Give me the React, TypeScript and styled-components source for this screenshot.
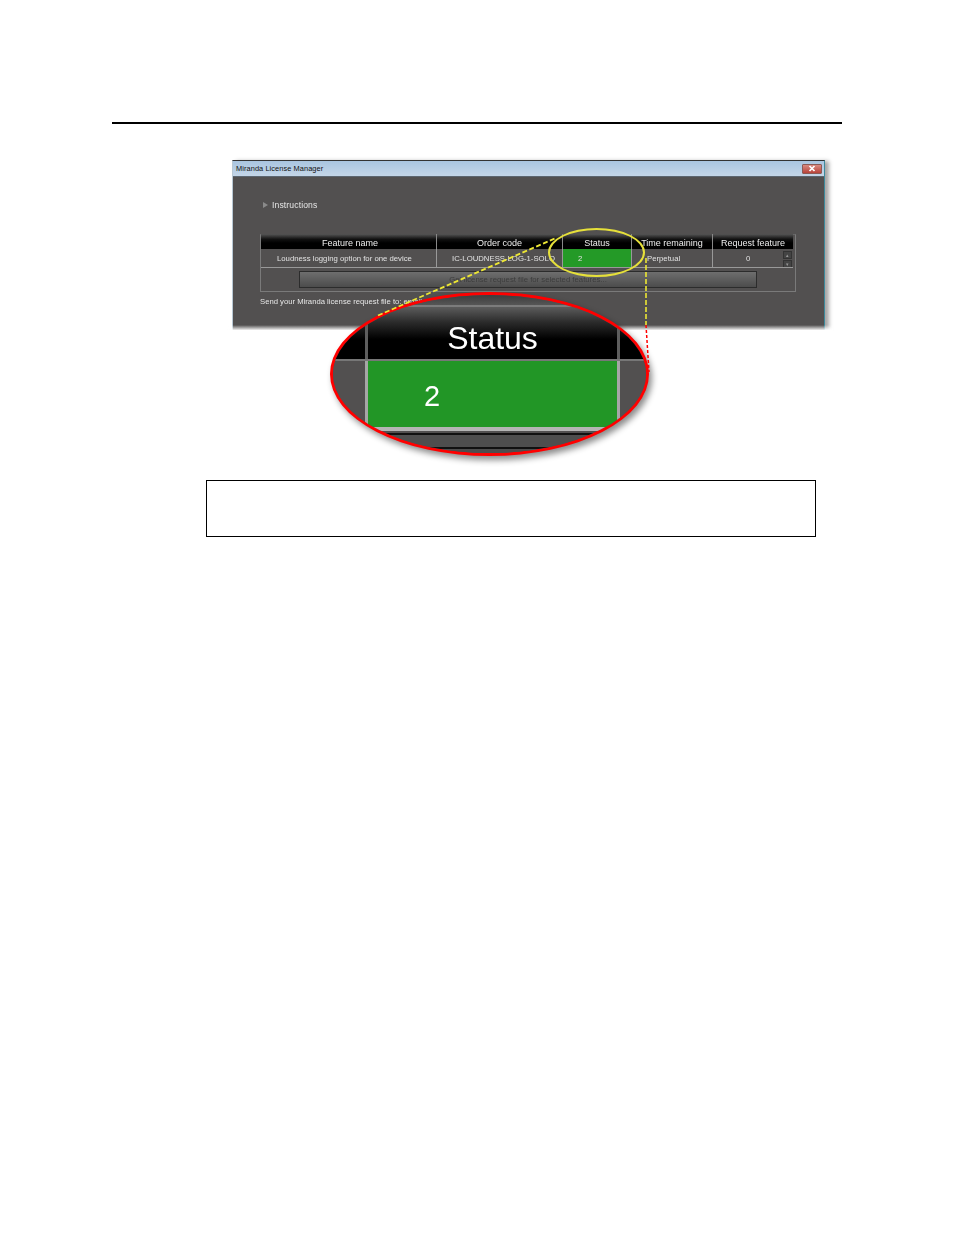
import React from 'react';
import styled, { createGlobalStyle } from 'styled-components';

const Global = createGlobalStyle`
  html, body { margin: 0; padding: 0; background: #fff; }
  * { box-sizing: border-box; }
`;
const Page = styled.div`
  min-height: 1235px; padding: 122px 0 0 112px; background: #fff;
  font-family: "Liberation Sans", Arial, sans-serif; overflow: hidden;
`;
const Rule = styled.div`width: 730px; height: 2px; background: #000;`;
const Figure = styled.div`position: relative; width: 600px; height: 320px; margin: 36px 0 0 120px;`;
const Win = styled.div`
  position: relative; width: 593px; height: 170px; display: flex; flex-direction: column;
  background: #525050; border-top: 1px solid #333; border-left: 1px solid #b8c8d4; border-right: 1px solid #3e8a9c;
  box-shadow: 4px 1px 4px rgba(0,0,0,.35); filter: blur(.4px);
  &::after { content: ""; position: absolute; left: -6px; right: -9px; bottom: -6px; height: 11px;
    background: linear-gradient(rgba(255,255,255,0), #fff 50%); }
`;
const TitleBar = styled.div`
  height: 16px; flex: none; display: flex; align-items: center; justify-content: space-between; padding: 0 2px 0 3px;
  background: linear-gradient(#a9c5e0, #c4d6e8); border-bottom: 1px solid #5c6670;
`;
const TitleText = styled.span`font-size: 7.4px; letter-spacing: .08px; color: #111;`;
const CloseBtn = styled.div`
  width: 20px; height: 10px; display: flex; align-items: center; justify-content: center;
  background: linear-gradient(#d98a80, #b8433a); border: 1px solid #8c5a55; border-radius: 1px;
`;
const Body = styled.div`flex: 1; padding: 22px 27px 0; color: #e6e6e6;`;
const Instructions = styled.div`display: flex; align-items: center; gap: 4px; height: 12px; padding-left: 3px; font-size: 8.6px; letter-spacing: .12px;`;
const Arrow = styled.span`width: 0; height: 0; border-left: 5px solid #8a8a8a; border-top: 3px solid transparent; border-bottom: 3px solid transparent;`;
const Panel = styled.div`width: 536px; height: 58px; margin-top: 23px; border: 1px solid #7a7a7a; border-top: 1px solid #666;`;
const Table = styled.div`display: grid; grid-template-columns: 175px 126px 69px 81px 81px; width: 532px; margin-top: -1px;`;
const Head = styled.div<{ $shift?: number }>`
  height: 15px; padding: 2px 0 0 ${p => p.$shift ?? 0}px; display: flex; align-items: center; justify-content: center; font-size: 9px; color: #eee;
  background: linear-gradient(#555 0, #111 35%, #000 60%); border-left: 1px solid #888; white-space: nowrap;
  &:first-child { border-left: 0; }
`;
const Cell = styled.div<{ $green?: boolean; $pad?: number }>`
  position: relative; height: 19px; padding-top: 1px; display: flex; align-items: center; font-size: 7.75px; color: #e2e2e2; white-space: nowrap; overflow: hidden;
  padding-left: ${p => p.$pad ?? 0}px;
  background: ${p => (p.$green ? '#249a27' : 'transparent')};
  border-left: 1px solid #999; border-bottom: 1px solid #999;
  &:nth-child(6) { border-left: 0; }
`;
const Spinners = styled.div`position: absolute; right: 1px; top: 2px; display: flex; flex-direction: column; gap: 1px;`;
const Spin = styled.div`
  width: 9px; height: 8px; background: #444; border: 1px solid #333; color: #999; font-size: 5px; line-height: 6px; text-align: center;
`;
const ButtonRow = styled.div`display: flex; padding: 3px 0 0 38px;`;
const ReqButton = styled.div`
  width: 458px; height: 17px; display: flex; align-items: center; justify-content: center;
  background: linear-gradient(#6e6e6e, #4c4c4c); border: 1px solid #2c2c2c; font-size: 7.75px; color: #3c3c3c; white-space: nowrap;
`;
const SendText = styled.div`margin-top: 4px; font-size: 7.7px; height: 12px; line-height: 12px; color: #e6e6e6;`;

const Leaders = styled.svg`position: absolute; left: 0; top: 0; width: 600px; height: 320px; overflow: visible; pointer-events: none;`;
const YellowRing = styled.div`
  position: absolute; left: 316px; top: 68px; width: 97px; height: 49px; border: 2px solid #e6e03a; border-radius: 50%;
`;
const Magnifier = styled.div`
  position: absolute; left: 98px; top: 132px; width: 319px; height: 164px; border: 3px solid #f00; border-radius: 50%;
  overflow: hidden; background: #525050; display: flex; flex-direction: column; color: #fff;
  filter: drop-shadow(3px 4px 3px rgba(0,0,0,.45));
`;
const ZoomTop = styled.div`height: 12px; flex: none; background: linear-gradient(#3c3c3c, #565656); border-bottom: 2px solid #7c7c7c;`;
const ZoomRows = styled.div`display: grid; grid-template-columns: 32px 3px 249px 3px 1fr; flex: none;`;
const ZoomHead = styled.div`
  height: 52px; padding-top: 10px; background: linear-gradient(#5c5c5c 0, #2a2a2a 30%, #000 62%); display: flex; align-items: center; justify-content: center;
  font-size: 32px; color: #fff; line-height: 1; filter: blur(.4px);
`;
const ZoomGap = styled.div`height: 2px; grid-column: 1 / -1; background: #777;`;
const ZoomSep = styled.div<{ $h: number; $light?: boolean }>`height: ${p => p.$h}px; background: ${p => (p.$light ? '#a6a6a6' : '#5e5e5e')};`;
const ZoomSide = styled.div`height: 66px; background: #525050;`;
const ZoomGreen = styled.div`
  height: 66px; background: #229626; font-size: 29px; line-height: 70px; padding-left: 56px; filter: blur(.4px);
`;
const ZoomBar = styled.div`height: 4px; flex: none; margin-left: 35px; background: #b5b5b5;`;
const ZoomBottom = styled.div`
  flex: 1; margin-top: 2px; border-top: 2px solid #111; background: #4e4e4e; position: relative;
  &::after { content: ""; position: absolute; left: 0; right: 0; top: 12px; height: 2px; background: #111; }
`;
const NoteBox = styled.div`width: 610px; height: 57px; margin-left: 94px; border: 1px solid #000; background: #fff;`;

export default function App() {
  return (
    <Page>
      <Global />
      <Rule />
      <Figure>
        <Win>
          <TitleBar>
            <TitleText>Miranda License Manager</TitleText>
            <CloseBtn>
              <svg width="8" height="7" viewBox="0 0 8 7"><path d="M1.5 1 L6.5 6 M6.5 1 L1.5 6" stroke="#fff" strokeWidth="1.7" /></svg>
            </CloseBtn>
          </TitleBar>
          <Body>
            <Instructions><Arrow />Instructions</Instructions>
            <Panel>
              <Table>
                <Head $shift={3}>Feature name</Head>
                <Head>Order code</Head>
                <Head>Status</Head>
                <Head>Time remaining</Head>
                <Head>Request feature</Head>
                <Cell $pad={16}>Loudness logging option for one device</Cell>
                <Cell $pad={15}>IC-LOUDNESS-LOG-1-SOLO</Cell>
                <Cell $green $pad={15}>2</Cell>
                <Cell $pad={15}>Perpetual</Cell>
                <Cell $pad={33}>0
                  <Spinners><Spin>▴</Spin><Spin>▾</Spin></Spinners>
                </Cell>
              </Table>
              <ButtonRow><ReqButton>Get license request file for selected features...</ReqButton></ButtonRow>
            </Panel>
            <SendText>Send your Miranda license request file to: email</SendText>
          </Body>
        </Win>
        <YellowRing />
        <Magnifier>
          <ZoomTop />
          <ZoomRows>
            <ZoomHead />
            <ZoomSep $h={52} />
            <ZoomHead>Status</ZoomHead>
            <ZoomSep $h={52} />
            <ZoomHead />
            <ZoomGap />
            <ZoomSide />
            <ZoomSep $h={66} $light />
            <ZoomGreen>2</ZoomGreen>
            <ZoomSep $h={66} $light />
            <ZoomSide />
          </ZoomRows>
          <ZoomBar />
          <ZoomBottom />
        </Magnifier>
        <Leaders viewBox="0 0 600 320">
          <path d="M146 155.5 L324 78" stroke="#ece634" strokeWidth="1.8" strokeDasharray="5 2.5" fill="none" />
          <path d="M414 98 L414 165" stroke="#ece634" strokeWidth="1.6" strokeDasharray="5 2" fill="none" />
          <path d="M414 165 L417 212" stroke="#f00" strokeWidth="1.5" strokeDasharray="3 2" fill="none" />
        </Leaders>
      </Figure>
      <NoteBox />
    </Page>
  );
}
